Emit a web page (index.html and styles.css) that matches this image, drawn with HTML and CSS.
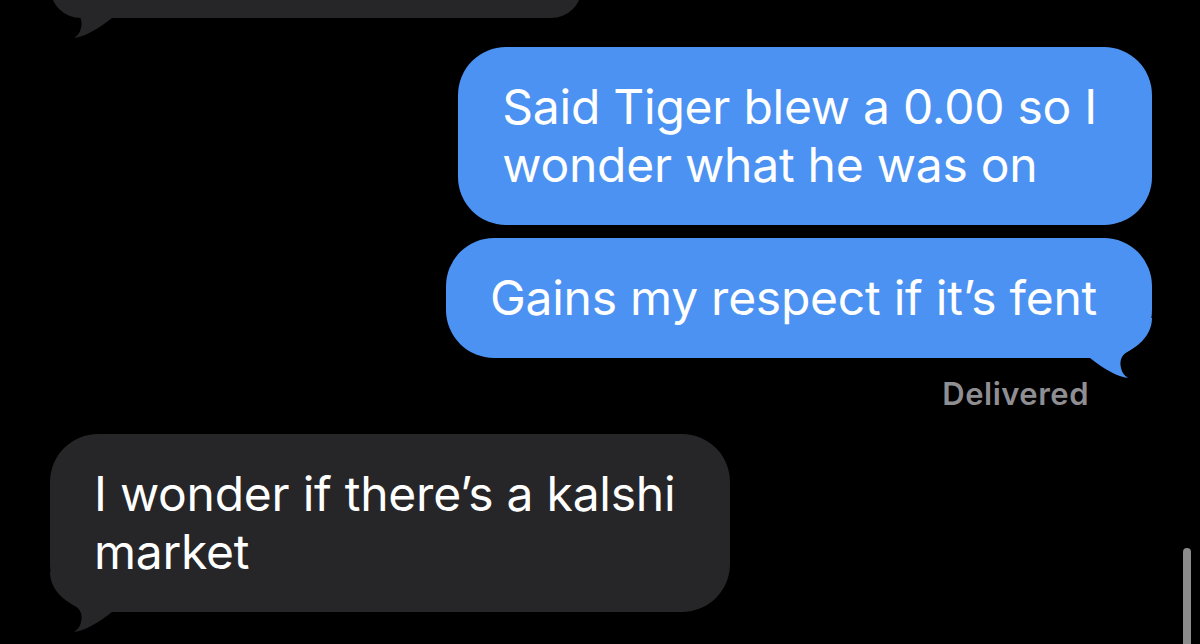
FILE: index.html
```html
<!DOCTYPE html>
<html lang="en">
<head>
    <meta charset="UTF-8">
    <meta name="viewport" content="width=device-width, initial-scale=1.0">
    <title>Messages</title>
    <link rel="stylesheet" href="styles.css">
</head>
<body>
    <main class="thread">
        <!-- Previous message, cut off by the top of the screen -->
        <div class="bubble received bubble-cut">
            <svg class="tail" viewBox="0 0 70 60" aria-hidden="true"><path d="M70 0 C70 14 60 26 48 32 C40 36 37 42 39 50 C40 55 43 58 46 60 C36 59 22 51 8 40 L0 40 L0 0 Z"/></svg>
        </div>

        <div class="bubble sent">Said Tiger blew a 0.00 so I<br>wonder what he was on</div>

        <div class="bubble sent">
            Gains my respect if it’s fent
            <svg class="tail" viewBox="0 0 70 60" aria-hidden="true"><path d="M70 0 C70 14 60 26 48 32 C40 36 37 42 39 50 C40 55 43 58 46 60 C36 59 22 51 8 40 L0 40 L0 0 Z"/></svg>
        </div>

        <div class="status">Delivered</div>

        <div class="bubble received">
            I wonder if there’s a kalshi<br>market
            <svg class="tail" viewBox="0 0 70 60" aria-hidden="true"><path d="M70 0 C70 14 60 26 48 32 C40 36 37 42 39 50 C40 55 43 58 46 60 C36 59 22 51 8 40 L0 40 L0 0 Z"/></svg>
        </div>
    </main>

    <div class="scroll-indicator"></div>
</body>
</html>
```

FILE: styles.css
```css
/* Общие стили */
* {
    margin: 0;
    padding: 0;
    box-sizing: border-box;
}

body {
    background: #000;
    min-height: 100vh;
    overflow: hidden;
    font-family: Inter, "Noto Sans", "Liberation Sans", sans-serif;
    color: #fff;
}

/* Лента сообщений */
.thread {
    display: flex;
    flex-direction: column;
    padding: 0 48px 0 50px;
}

/* Пузырь сообщения */
.bubble {
    position: relative;
    padding: 31px 55px 31px 44px;
    border-radius: 48px;
    font-size: 48px;
    line-height: 58px;
    letter-spacing: -0.25px;
    white-space: nowrap;
}

.bubble .tail {
    position: absolute;
    bottom: -20px;
    width: 70px;
    height: 60px;
}

.sent {
    align-self: flex-end;
    background: #4c92f2;
    margin-top: 13px;
}

.sent .tail {
    right: 0;
    fill: #4c92f2;
}

.received {
    align-self: flex-start;
    background: #262628;
    margin-top: 22px;
}

.received .tail {
    left: 0;
    fill: #262628;
    transform: scaleX(-1);
}

/* Верхнее сообщение, обрезанное краем экрана */
.bubble-cut {
    width: 532px;
    height: 60px;
    margin-top: -44px;
}

.bubble-cut + .sent {
    margin-top: 29px;
}

/* Статус доставки */
.status {
    align-self: flex-end;
    margin: 18px 63px 0 0;
    font-size: 31px;
    line-height: 36px;
    font-weight: 600;
    letter-spacing: 0.5px;
    color: #8e8e93;
}

/* Индикатор прокрутки */
.scroll-indicator {
    position: fixed;
    top: 548px;
    right: 9px;
    bottom: 0;
    width: 8px;
    border-radius: 4px 4px 0 0;
    background: #8b8b8b;
}
```
